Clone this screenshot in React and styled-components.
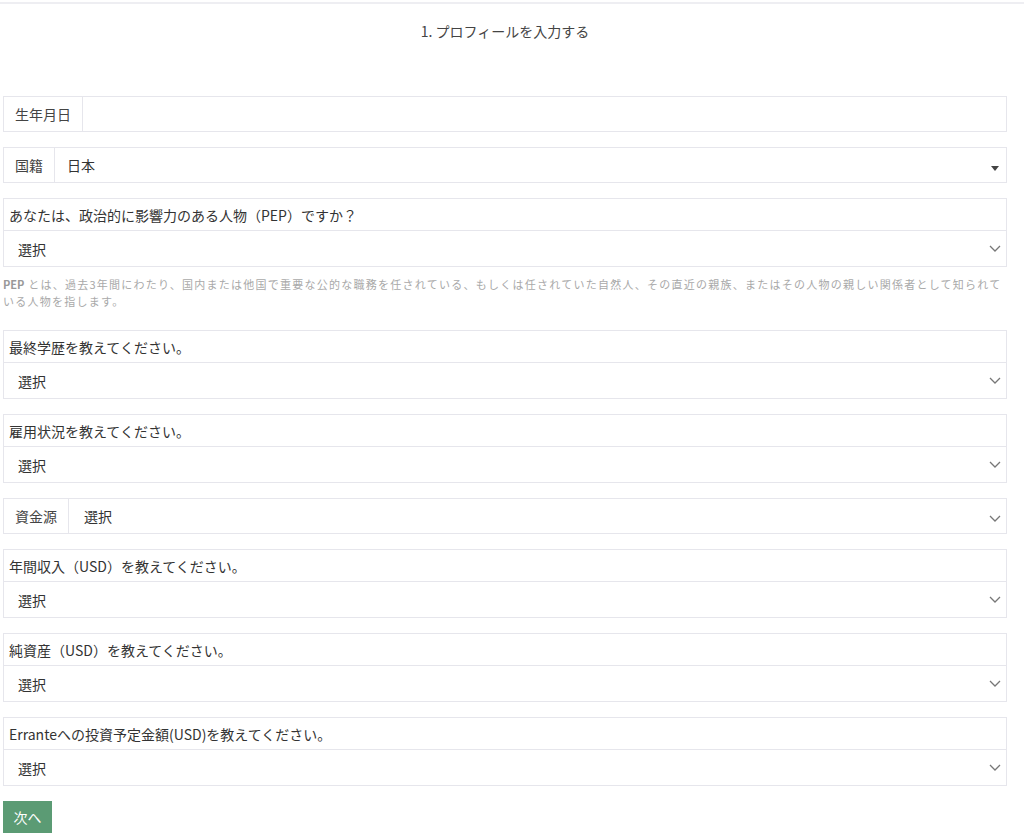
import styled, { createGlobalStyle } from 'styled-components';

const GlobalStyle = createGlobalStyle`
  body {
    margin: 0;
    background: #fff;
    font-family: "Noto Sans CJK JP", "Noto Sans", sans-serif;
    color: #333;
  }
`;

const Page = styled.div`
  width: 1004px;
  padding: 0 0 0 3px;
`;

const TopLine = styled.div`
  width: 1024px;
  margin-top: 2px;
  height: 2px;
  background: #eeeef2;
`;

const Title = styled.h1`
  margin: 0;
  height: 92px;
  padding-top: 17px;
  box-sizing: border-box;
  text-align: center;
  font-size: 14px;
  font-weight: 400;
  color: #444;
`;

const Form = styled.div`
  display: flex;
  flex-direction: column;
  gap: 15px;
`;

const Group = styled.div`
  display: flex;
  height: 36px;
  border: 1px solid #e6e6ec;
  box-sizing: border-box;
`;

const Addon = styled.div`
  display: flex;
  align-items: center;
  padding: 0 11px;
  font-size: 14px;
  color: #444;
  border-right: 1px solid #e6e6ec;
`;

const Control = styled.div`
  flex: 1;
  display: flex;
  align-items: center;
  justify-content: space-between;
  padding: 0 ${p => p.$pad || 12}px;
  font-size: 14px;
  color: #333;
`;

const Question = styled.div`
  border: 1px solid #e6e6ec;
`;

const QuestionLabel = styled.div`
  height: 31px;
  display: flex;
  align-items: center;
  padding: 0 5px;
  font-size: 14px;
  color: #333;
  border-bottom: 1px solid #e6e6ec;
`;

const SelectRow = styled.div`
  height: 35px;
  display: flex;
  align-items: center;
  justify-content: space-between;
  padding: 0 5px 0 14px;
  font-size: 14px;
  color: #333;
`;

const Help = styled.p`
  margin: -6px 0 5px;
  font-size: 11px;
  line-height: 17px;
  letter-spacing: 1.25px;
  color: #a9a9a9;
  b {
    font-weight: 700;
    letter-spacing: 0;
    color: #999;
  }
`;

const Button = styled.button`
  align-self: flex-start;
  width: 49px;
  height: 32px;
  border: none;
  background: #5b9b74;
  color: #fff;
  font-family: inherit;
  font-size: 14px;
  padding: 0;
`;

const Caret = () => (
  <svg width="8" height="5" viewBox="0 0 8 5">
    <path d="M0 0h8L4 5z" fill="#444" />
  </svg>
);

const Chevron = () => (
  <svg width="12" height="7" viewBox="0 0 12 7">
    <path d="M1 1l5 5 5-5" fill="none" stroke="#777" strokeWidth="1.3" />
  </svg>
);

const SelectQuestion = ({ label }) => (
  <Question>
    <QuestionLabel>{label}</QuestionLabel>
    <SelectRow>
      選択
      <Chevron />
    </SelectRow>
  </Question>
);

export default function App() {
  return (
    <>
      <GlobalStyle />
      <TopLine />
      <Page>
        <Title>1. プロフィールを入力する</Title>
        <Form>
          <Group>
            <Addon>生年月日</Addon>
            <Control />
          </Group>
          <Group>
            <Addon>国籍</Addon>
            <Control $pad={12}>
              日本
              <span style={{ marginRight: -5 }}><Caret /></span>
            </Control>
          </Group>
          <SelectQuestion label="あなたは、政治的に影響力のある人物（PEP）ですか？" />
          <Help>
            <b>PEP</b> とは、過去3年間にわたり、国内または他国で重要な公的な職務を任されている、もしくは任されていた自然人、その直近の親族、またはその人物の親しい関係者として知られている人物を指します。
          </Help>
          <SelectQuestion label="最終学歴を教えてください。" />
          <SelectQuestion label="雇用状況を教えてください。" />
          <Group>
            <Addon>資金源</Addon>
            <Control $pad={15}>
              選択
              <span style={{ marginRight: -10 }}><Chevron /></span>
            </Control>
          </Group>
          <SelectQuestion label="年間収入（USD）を教えてください。" />
          <SelectQuestion label="純資産（USD）を教えてください。" />
          <SelectQuestion label="Erranteへの投資予定金額(USD)を教えてください。" />
          <Button>次へ</Button>
        </Form>
      </Page>
    </>
  );
}
